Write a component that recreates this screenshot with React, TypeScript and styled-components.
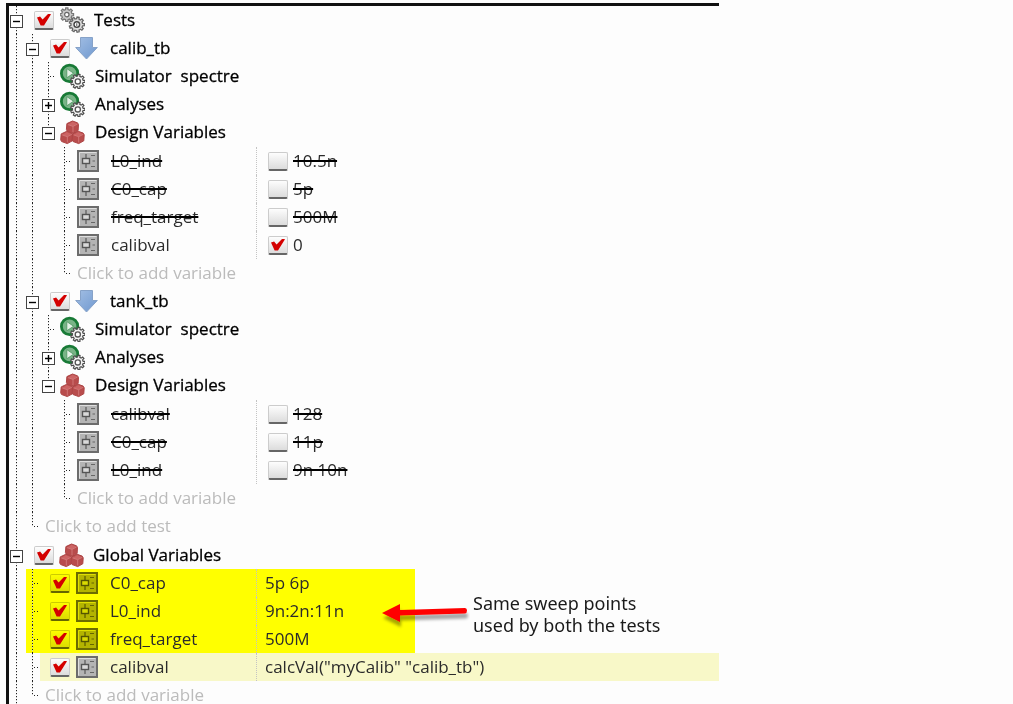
import React, { useId } from "react";
import styled, { createGlobalStyle, css } from "styled-components";

const GlobalStyle = createGlobalStyle`
  * { box-sizing: border-box; }
  body {
    margin: 0;
    background: #fdfdfd;
    color: #2b2b2b;
    font-family: "Open Sans", "Noto Sans", sans-serif;
    font-size: 17px;
    line-height: 22px;
  }
  button, input { font: inherit; margin: 0; }
`;

type Guide = "blank" | "line" | "tick" | "end" | "open" | "openLast" | "closed";
type Mark = "none" | "yellow" | "pale";

const Page = styled.main`
  padding: 3px 0 0 6px;
`;

const Panel = styled.section`
  width: 100%;
  max-width: 713px;
  border-top: 3px solid #111;
  border-left: 3px solid #111;
`;

const Group = styled.div`
  margin-top: 1px;
`;

const highlight = {
  none: css``,
  yellow: css`
    background: linear-gradient(#ff0, #ff0) no-repeat 17px 0 / 389px 100%;
  `,
  pale: css`
    background: linear-gradient(#f8f8c8, #f8f8c8) no-repeat 31px 0 / 100% 100%;
  `,
};

const Row = styled.div<{ $mark?: Mark }>`
  display: flex;
  align-items: center;
  height: 28px;
  ${({ $mark = "none" }) => highlight[$mark]}
`;

const dotsDown = "repeating-linear-gradient(180deg, #222 0 1px, #ccc 1px 2px, transparent 2px 3px)";
const dotsAcross = "repeating-linear-gradient(90deg, #222 0 1px, transparent 1px 3px)";

const guideArt: Record<Guide, string> = {
  blank: "none",
  line: `${dotsDown} 7px 0 / 1px 100% no-repeat`,
  open: `${dotsDown} 7px 0 / 1px 100% no-repeat`,
  closed: `${dotsDown} 7px 0 / 1px 100% no-repeat`,
  openLast: `${dotsDown} 7px 0 / 1px 14px no-repeat`,
  tick: `${dotsDown} 7px 0 / 1px 100% no-repeat, ${dotsAcross} 9px 14px / 4px 1px no-repeat`,
  end: `${dotsDown} 7px 0 / 1px 14px no-repeat, ${dotsAcross} 9px 14px / 4px 1px no-repeat`,
};

const GuideCell = styled.span<{ $kind: Guide }>`
  flex: none;
  display: flex;
  align-items: center;
  width: 16px;
  height: 100%;
  padding: 2px 0 0 1px;
  background: ${({ $kind }) => guideArt[$kind]};
`;

const Expander = styled.button`
  display: block;
  width: 13px;
  height: 13px;
  padding: 0;
  border: 1px solid #444;
  background: #fff;
  line-height: 0;
`;

const Body = styled.div<{ $inset: number }>`
  display: flex;
  align-items: center;
  flex: 1;
  min-width: 0;
  height: 100%;
  padding-left: ${({ $inset }) => $inset}px;
`;

const Check = styled.input`
  appearance: none;
  flex: none;
  display: grid;
  place-items: center;
  width: 20px;
  height: 19px;
  border: 1px solid #ccc;
  border-bottom: 2px solid #666;
  border-radius: 2px;
  background: linear-gradient(#fdfdfd, #dcdcdc);

  &:checked::before {
    content: "";
    width: 14px;
    height: 12px;
    background: #d40000;
    clip-path: polygon(0 34%, 22% 24%, 40% 50%, 82% 0, 100% 6%, 50% 100%, 26% 100%);
  }
`;

const IconBox = styled.span<{ $gap: number; $tinted?: boolean }>`
  flex: none;
  display: flex;
  margin-left: ${({ $gap }) => $gap}px;
  mix-blend-mode: ${({ $tinted }) => ($tinted ? "multiply" : "normal")};
`;

const Name = styled.label<{ $gap: number; $strong?: boolean; $struck?: boolean }>`
  margin-left: ${({ $gap }) => $gap}px;
  white-space: pre;
  color: ${({ $strong }) => ($strong ? "#000" : "#2b2b2b")};
  -webkit-text-stroke: ${({ $strong }) => ($strong ? "0.3px #000" : "0")};
  text-decoration: ${({ $struck }) => ($struck ? "line-through #000 2px" : "none")};
`;

const NameColumn = styled.div<{ $depth: number }>`
  flex: none;
  display: flex;
  align-items: center;
  width: ${({ $depth }) => 247 - $depth * 16}px;
  height: 100%;
`;

const ValueColumn = styled.div<{ $inset: number }>`
  display: flex;
  align-items: center;
  flex: 1;
  height: 100%;
  padding-left: ${({ $inset }) => $inset}px;
  border-left: 1px dotted #c4c4c4;
`;

const AddButton = styled.button`
  padding: 0;
  border: 0;
  background: none;
  color: #bbb;
  white-space: nowrap;
`;

const NoteRows = styled.div`
  display: grid;
`;

const NoteList = styled.div`
  grid-area: 1 / 1;
`;

const Note = styled.aside`
  grid-area: 1 / 1;
  place-self: center start;
  display: flex;
  align-items: center;
  padding: 5px 0 0 371px;
  color: #1a1a1a;
  font-family: "Noto Sans", "Open Sans", sans-serif;
  font-size: 18px;
`;

const NoteText = styled.p`
  margin: 0 0 0 3px;
`;

function gearPath(cx: number, cy: number, outer: number, inner: number, teeth: number) {
  const points: string[] = [];
  for (let i = 0; i < teeth; i++) {
    const base = (i / teeth) * Math.PI * 2;
    const step = (Math.PI * 2) / teeth;
    [[-0.3, inner], [-0.2, outer], [0.2, outer], [0.3, inner]].forEach(([t, r]) => {
      const a = base + t * step;
      points.push(`${(cx + Math.cos(a) * r).toFixed(2)} ${(cy + Math.sin(a) * r).toFixed(2)}`);
    });
  }
  return `M${points.join("L")}Z`;
}

const GearsIcon = () => (
  <svg width="25" height="26" viewBox="0 0 25 26" aria-hidden="true">
    <path d={gearPath(6.8, 7.6, 6.8, 5.2, 8)} fill="#c9c9c9" stroke="#777" strokeWidth="1.3" />
    <circle cx="6.8" cy="7.6" r="2.2" fill="#fff" stroke="#666" strokeWidth="1.2" />
    <path d={gearPath(16.8, 17.6, 7.6, 5.9, 9)} fill="#dcdcdc" stroke="#666" strokeWidth="1.3" />
    <circle cx="16.8" cy="17.6" r="2.8" fill="#fff" stroke="#444" strokeWidth="1.4" />
    <path d="M16.8 16.2v3" stroke="#555" />
  </svg>
);

const RunIcon = () => (
  <svg width="25" height="26" viewBox="0 0 25 26" aria-hidden="true">
    <circle cx="9.6" cy="10.4" r="8.2" fill="#79b487" stroke="#187a36" strokeWidth="2.8" />
    <path d="M6.8 5.6L13.6 10.2L6.8 14.8Z" fill="#e4f2e7" stroke="#4b9460" strokeWidth="0.8" />
    <path d={gearPath(17.8, 18.4, 7.2, 5.4, 9)} fill="#f3f3f3" stroke="#4d4d4d" strokeWidth="1.2" />
    <circle cx="17.8" cy="18.4" r="2.6" fill="#fff" stroke="#555" strokeWidth="1.3" />
  </svg>
);

const Cube = ({ x, y }: { x: number; y: number }) => (
  <g transform={`translate(${x} ${y})`}>
    <path
      d="M0 -6L5 -4.2L6 -2.5L5.6 3.5L0.5 6.3L-5.2 4.2L-6.1 2.5L-5.6 -3.4Z"
      fill="#b84c4c"
      stroke="#ad4545"
      strokeLinejoin="round"
    />
    <path d="M0 -5.2L4.6 -3.4L0.5 -0.8L-4.6 -2.6Z" fill="#cc6464" />
    <path d="M-4.6 -2.4L0.5 -0.6V5.2M0.5 -0.6L5 -3" stroke="#d68080" strokeWidth="0.8" fill="none" />
  </g>
);

const CubesIcon = () => (
  <svg width="25" height="26" viewBox="0 0 25 26" aria-hidden="true">
    <Cube x={12.5} y={8} />
    <Cube x={6.8} y={18.3} />
    <Cube x={18.2} y={18.3} />
  </svg>
);

const ArrowIcon = () => (
  <svg width="23" height="24" viewBox="0 0 23 24" aria-hidden="true">
    <defs>
      <linearGradient id="arrowFill" x1="0" y1="0" x2="1" y2="1">
        <stop offset="0" stopColor="#a3bfe4" />
        <stop offset="1" stopColor="#6f98cf" />
      </linearGradient>
    </defs>
    <path d="M5.5 1.5H17.5V11.5H22.3L11.5 23L0.7 11.5H5.5Z" fill="url(#arrowFill)" stroke="#86a2c8" />
  </svg>
);

const SliderIcon = () => (
  <svg width="22" height="22" viewBox="0 0 22 22" aria-hidden="true">
    <rect x="1" y="1" width="20" height="20" fill="#b4b4b4" stroke="#6c6c6c" strokeWidth="2" />
    <path d="M2.5 19.5V2.5H19.5" fill="none" stroke="#dedede" />
    <path d="M9 4V18" stroke="#666" strokeWidth="1.4" />
    <rect x="5.5" y="8.5" width="7" height="5" fill="#d9d9d9" stroke="#555" strokeWidth="1.4" />
    <path d="M14 5.5H18M15.5 11H18M14 16.5H18" stroke="#666" strokeWidth="1.2" />
  </svg>
);

function Guides({ kinds, name }: { kinds: Guide[]; name: string }) {
  return (
    <>
      {kinds.map((kind, i) => (
        <GuideCell key={i} $kind={kind}>
          {(kind === "open" || kind === "openLast" || kind === "closed") && (
            <Expander type="button" aria-label={`Toggle ${name}`} aria-expanded={kind !== "closed"}>
              <svg width="11" height="11" viewBox="0 0 11 11" aria-hidden="true">
                <path
                  d={kind === "closed" ? "M2 5.5H9M5.5 2V9" : "M2 5.5H9"}
                  stroke="#000"
                  strokeWidth="1.4"
                />
              </svg>
            </Expander>
          )}
        </GuideCell>
      ))}
    </>
  );
}

interface BranchProps {
  guides: Guide[];
  name: string;
  icon: React.ReactNode;
  checked?: boolean;
  inset: number;
  iconGap?: number;
  nameGap?: number;
}

function BranchRow({ guides, name, icon, checked, inset, iconGap = 0, nameGap = 10 }: BranchProps) {
  const id = useId();
  return (
    <Row>
      <Guides kinds={guides} name={name} />
      <Body $inset={inset}>
        {checked && <Check id={id} type="checkbox" defaultChecked />}
        <IconBox $gap={iconGap}>{icon}</IconBox>
        <Name as={checked ? "label" : "span"} htmlFor={checked ? id : undefined} $gap={nameGap} $strong>
          {name}
        </Name>
      </Body>
    </Row>
  );
}

interface Variable {
  name: string;
  value: string;
  active?: boolean;
}

function TestVariableRow({ name, value, active = false }: Variable) {
  const id = useId();
  return (
    <Row>
      <Guides kinds={["line", "line", "blank", "tick"]} name={name} />
      <NameColumn $depth={4}>
        <IconBox $gap={4}><SliderIcon /></IconBox>
        <Name as="span" $gap={12} $struck={!active}>{name}</Name>
      </NameColumn>
      <ValueColumn $inset={11}>
        <Check id={id} type="checkbox" defaultChecked={active} />
        <Name htmlFor={id} $gap={5} $struck={!active}>{value}</Name>
      </ValueColumn>
    </Row>
  );
}

function GlobalVariableRow({ name, value, mark }: Variable & { mark: Mark }) {
  const id = useId();
  const tinted = mark === "yellow";
  return (
    <Row $mark={mark}>
      <Guides kinds={["line", "tick"]} name={name} />
      <NameColumn $depth={2}>
        <IconBox $gap={9} $tinted={tinted}>
          <Check id={id} type="checkbox" defaultChecked />
        </IconBox>
        <IconBox $gap={6} $tinted={tinted}><SliderIcon /></IconBox>
        <Name htmlFor={id} $gap={12}>{name}</Name>
      </NameColumn>
      <ValueColumn $inset={8}>{value}</ValueColumn>
    </Row>
  );
}

function AddRow({ guides, children }: { guides: Guide[]; children: string }) {
  return (
    <Row>
      <Guides kinds={guides} name="" />
      <Body $inset={4}>
        <AddButton type="button">{children}</AddButton>
      </Body>
    </Row>
  );
}

function Test({ name, variables }: { name: string; variables: Variable[] }) {
  return (
    <>
      <BranchRow guides={["line", "open"]} name={name} icon={<ArrowIcon />} checked inset={9} iconGap={5} nameGap={12} />
      <BranchRow guides={["line", "line", "tick"]} name="Simulator  spectre" icon={<RunIcon />} inset={3} />
      <BranchRow guides={["line", "line", "closed"]} name="Analyses" icon={<RunIcon />} inset={3} />
      <BranchRow guides={["line", "line", "openLast"]} name="Design Variables" icon={<CubesIcon />} inset={3} />
      <Group>
        {variables.map((v) => <TestVariableRow key={v.name} {...v} />)}
        <AddRow guides={["line", "line", "blank", "end"]}>Click to add variable</AddRow>
      </Group>
    </>
  );
}

const calibVariables: Variable[] = [
  { name: "L0_ind", value: "10.5n" },
  { name: "C0_cap", value: "5p" },
  { name: "freq_target", value: "500M" },
  { name: "calibval", value: "0", active: true },
];

const tankVariables: Variable[] = [
  { name: "calibval", value: "128" },
  { name: "C0_cap", value: "11p" },
  { name: "L0_ind", value: "9n 10n" },
];

const sweepVariables: Variable[] = [
  { name: "C0_cap", value: "5p 6p" },
  { name: "L0_ind", value: "9n:2n:11n" },
  { name: "freq_target", value: "500M" },
];

export default function App() {
  return (
    <Page>
      <GlobalStyle />
      <Panel>
        <BranchRow guides={["open"]} name="Tests" icon={<GearsIcon />} checked inset={9} iconGap={6} nameGap={9} />
        <Test name="calib_tb" variables={calibVariables} />
        <Test name="tank_tb" variables={tankVariables} />
        <AddRow guides={["line", "end"]}>Click to add test</AddRow>
        <Group>
          <BranchRow
            guides={["open"]}
            name="Global Variables"
            icon={<CubesIcon />}
            checked
            inset={9}
            iconGap={5}
            nameGap={9}
          />
          <NoteRows>
            <NoteList>
              {sweepVariables.map((v) => <GlobalVariableRow key={v.name} {...v} mark="yellow" />)}
            </NoteList>
            <Note>
              <svg width="90" height="34" viewBox="0 0 90 34" aria-hidden="true">
                <defs>
                  <filter id="arrowShadow" x="-10%" y="-20%" width="120%" height="160%">
                    <feDropShadow dx="1" dy="5" stdDeviation="1.5" floodColor="#000" floodOpacity="0.35" />
                  </filter>
                </defs>
                <path
                  d="M2 16L20 7V13L85 11Q87 11 87 13.5T85 16.5L20 18.5V25Z"
                  fill="#f00"
                  filter="url(#arrowShadow)"
                />
              </svg>
              <NoteText>
                Same sweep points
                <br />
                used by both the tests
              </NoteText>
            </Note>
          </NoteRows>
          <GlobalVariableRow name="calibval" value={'calcVal("myCalib" "calib_tb")'} mark="pale" />
          <AddRow guides={["line", "end"]}>Click to add variable</AddRow>
        </Group>
      </Panel>
    </Page>
  );
}
